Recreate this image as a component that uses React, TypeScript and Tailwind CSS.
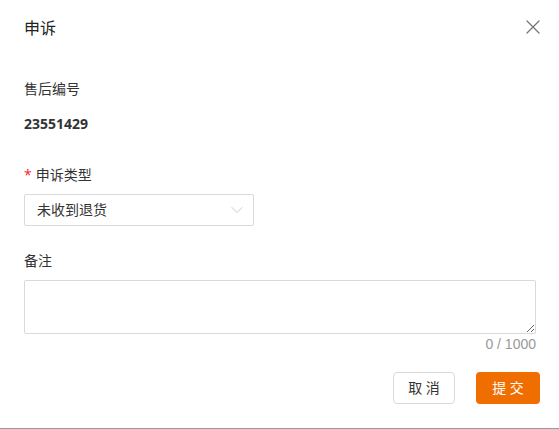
import { X, ChevronDown } from 'lucide-react'

const font = { fontFamily: '"Open Sans", "Noto Sans CJK SC", sans-serif' }

const App = () => {
  return (
    <div
      className="flex h-[429px] w-[559px] flex-col border-b border-[#9a9a9a] bg-white text-sm text-[#333]"
      style={font}
    >
      <div className="flex h-14 items-center justify-between pl-6 pr-[14px]">
        <span className="text-base text-[#222]">申诉</span>
        <X className="-mt-[2px] h-[24px] w-[24px] text-[#777]" strokeWidth={1.3} />
      </div>

      <div className="flex flex-col px-6">
        <div className="mt-[23px] leading-5">售后编号</div>
        <div className="mt-[15px] font-bold leading-5">23551429</div>

        <div className="mt-[31px] flex items-center leading-5">
          <span className="mr-1 text-[#f5222d]">*</span>
          申诉类型
        </div>
        <div className="mt-[9px] flex h-8 w-[230px] items-center justify-between rounded-[2px] border border-[#d9d9d9] pl-3 pr-[6px]">
          <span>未收到退货</span>
          <ChevronDown className="h-[20px] w-[20px] text-[#bbb]" strokeWidth={0.9} />
        </div>

        <div className="mt-[25px] leading-5">备注</div>
        <textarea className="mt-[9px] h-[54px] w-[512px] resize-y rounded-[2px] border border-[#d9d9d9] px-3 py-1 outline-none" />
        <div className="w-[512px] text-right leading-5 text-[#999]" style={{ fontFamily: '"Liberation Sans", sans-serif' }}>
          0 / 1000
        </div>
      </div>

      <div className="mt-[18px] flex justify-end gap-[21px] pr-[19px]">
        <button className="h-8 w-[62px] rounded-[4px] border border-[#d9d9d9] bg-white text-[#333]">
          取 消
        </button>
        <button className="h-8 w-[64px] rounded-[4px] bg-[#f06e00] text-white">
          提 交
        </button>
      </div>
    </div>
  )
}

export default App
